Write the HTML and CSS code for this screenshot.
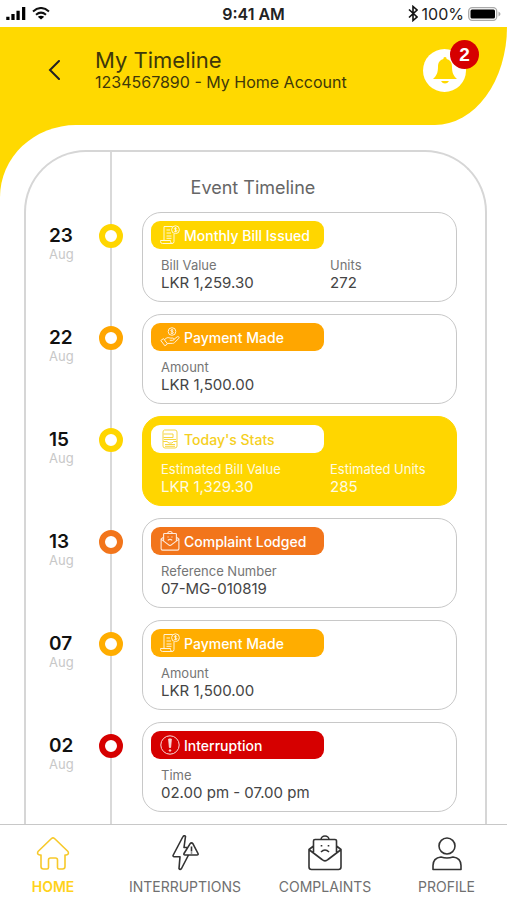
FILE: index.html
```html
<!DOCTYPE html>
<html lang="en">
<head>
<meta charset="utf-8">
<meta name="viewport" content="width=device-width, initial-scale=1">
<title>My Timeline</title>
<link rel="stylesheet" href="styles.css">
</head>
<body>
<svg class="sprite" aria-hidden="true">
  <symbol id="bill" viewBox="0 0 20 20">
    <path d="M4 15V1.500h8.500M14 9v7.500a2 2 0 0 1-2 2H2.500a2 2 0 0 1-2-2V15.500h10v1a2 2 0 0 0 2 2M6.500 5h3.500M6.500 8h4.500M6.500 11h5M6.500 13.300h5"/>
    <circle cx="15.500" cy="4.700" r="3.900"/>
    <path d="M16.800 3.500c-.7-.8-2.500-.7-2.500.3s2.600.7 2.600 1.900-2 1.300-2.800.4M15.500 2.200v5"/>
  </symbol>
  <symbol id="hand" viewBox="0 0 20 20">
    <circle cx="12" cy="4.500" r="3.800"/>
    <path d="M13.300 3.300c-.7-.8-2.500-.7-2.500.3s2.600.7 2.600 1.900-2 1.300-2.800.4M12 2v5M.8 13.500l2.700-1.900 4 5.300-2.600 1.900zM4.300 12.700l2.500-1.800c1.500-.8 2.700.2 4 .2h2c1.700 0 1.500 2.200 0 2.200H9.800M13.800 12.500l3.400-2.700c1.300-.8 2.600.5 1.500 1.700l-4.200 4.100c-.7.700-1.200.8-2 .8H7.300"/>
  </symbol>
  <symbol id="stats" viewBox="0 0 20 20">
    <path d="M4.500 1h10.500a2 2 0 0 1 2 2v14a2 2 0 0 1-2 2H5a2 2 0 0 1-2-2V3a2 2 0 0 1 1.500-2M3.500 5h9.500v3.500H3.500M3 12.500h4l2 1.500h3l1.500-1.500H17M5 15.500h10M5 17.300h10M4 10.500h12"/>
  </symbol>
  <symbol id="mail" viewBox="0 0 36 36">
    <path d="M6.500 11 2 14.500V32a2.500 2.500 0 0 0 2.500 2.500h27A2.500 2.500 0 0 0 34 32V14.500L29.500 11M2.500 15 15 24.500q3 2.700 6 0L33.500 15M6.500 18V6a1.500 1.500 0 0 1 1.500-1.500h20A1.500 1.500 0 0 1 29.500 6v12M14 4.500a4 3.500 0 0 1 8 0M14 17q4-4 8 0M14.500 10v1.500M21.500 10v1.500"/>
  </symbol>
  <symbol id="alert" viewBox="0 0 20 20">
    <circle cx="10" cy="10" r="9.200"/>
    <path d="M8.700 4h2.600l-.7 8.500H9.400z" fill="currentColor"/>
    <circle cx="10" cy="15.500" r=".8" fill="currentColor"/>
  </symbol>
</svg>

<div class="status">
  <div class="status-side">
    <svg class="signal" viewBox="0 0 21 14" aria-label="Signal"><path d="M0 10.500h3.500V14H0zM5.500 7.500H9V14H5.500zM11 4h3.500v10H11zM17 0h3.500v14H17z"/></svg>
    <svg class="wifi" viewBox="0 0 18 13" aria-label="Wi-Fi"><path d="M1 4.500q8-7 16 0M4 7.800q5-4.300 10 0" fill="none" stroke="#111" stroke-width="2"/><path d="M9 12.500 5.800 9.800q3.200-2.300 6.400 0z"/></svg>
  </div>
  <time class="clock">9:41 AM</time>
  <div class="status-side status-right">
    <svg class="bluetooth" viewBox="0 0 10 16" aria-label="Bluetooth"><path d="m1 4 8 7.500-4 3.500V1l4 3.500L1 12" fill="none" stroke="#111" stroke-width="1.600"/></svg>
    <span>100%</span>
    <svg class="battery" viewBox="0 0 33 14" aria-label="Battery"><rect x=".7" y=".7" width="28" height="12.600" rx="3.500" fill="#fff" stroke="#aaa" stroke-width="1.300"/><rect x="2.500" y="2.500" width="24.500" height="9" rx="1.500"/><path d="M30.500 4.500q4 2.500 0 5z" fill="#aaa"/></svg>
  </div>
</div>

<header class="header">
  <button class="back" aria-label="Back"><svg viewBox="0 0 12 20"><path d="M11 1 2 10l9 9"/></svg></button>
  <div class="heading">
    <h1>My Timeline</h1>
    <p>1234567890 - My Home Account</p>
  </div>
  <button class="bell" aria-label="Notifications">
    <svg viewBox="0 0 24 27"><path d="M12 0c1.200 0 1.600.8 1.600 2 3.800 1 5.400 4 5.400 7.500 0 6 1.200 9 5 12.500H0c3.800-3.500 5-6.500 5-12.500C5 6 6.600 3 10.400 2c0-1.200.4-2 1.600-2zM8 24h8q-1.500 2.500-4 2.500T8 24z"/></svg>
    <span class="count">2</span>
  </button>
</header>

<div class="backdrop">
<main class="content">
  <section class="panel">
    <h2>Event Timeline</h2>
    <ol class="events">
      <li class="event yellow">
        <time class="date"><b>23</b>Aug</time><span class="dot"></span>
        <article class="card">
          <h3><svg><use href="#bill"/></svg>Monthly Bill Issued</h3>
          <dl><div><dt>Bill Value</dt><dd>LKR 1,259.30</dd></div><div><dt>Units</dt><dd>272</dd></div></dl>
        </article>
      </li>
      <li class="event orange">
        <time class="date"><b>22</b>Aug</time><span class="dot"></span>
        <article class="card">
          <h3><svg><use href="#hand"/></svg>Payment Made</h3>
          <dl><div><dt>Amount</dt><dd>LKR 1,500.00</dd></div></dl>
        </article>
      </li>
      <li class="event yellow today">
        <time class="date"><b>15</b>Aug</time><span class="dot"></span>
        <article class="card">
          <h3><svg><use href="#stats"/></svg>Today's Stats</h3>
          <dl><div><dt>Estimated Bill Value</dt><dd>LKR 1,329.30</dd></div><div><dt>Estimated Units</dt><dd>285</dd></div></dl>
        </article>
      </li>
      <li class="event rust">
        <time class="date"><b>13</b>Aug</time><span class="dot"></span>
        <article class="card">
          <h3><svg class="heavy"><use href="#mail"/></svg>Complaint Lodged</h3>
          <dl><div><dt>Reference Number</dt><dd>07-MG-010819</dd></div></dl>
        </article>
      </li>
      <li class="event amber">
        <time class="date"><b>07</b>Aug</time><span class="dot"></span>
        <article class="card">
          <h3><svg><use href="#bill"/></svg>Payment Made</h3>
          <dl><div><dt>Amount</dt><dd>LKR 1,500.00</dd></div></dl>
        </article>
      </li>
      <li class="event red">
        <time class="date"><b>02</b>Aug</time><span class="dot"></span>
        <article class="card">
          <h3><svg><use href="#alert"/></svg>Interruption</h3>
          <dl><div><dt>Time</dt><dd>02.00 pm - 07.00 pm</dd></div></dl>
        </article>
      </li>
    </ol>
  </section>
</main>
</div>

<nav class="nav">
  <a class="active" href="#home"><svg viewBox="0 0 36 36"><path d="M16.500 3.500q1.500-1.300 3 0L33 16.500q1.500 3-2 3.500h-1v11.500a2.500 2.500 0 0 1-2.500 2.500H24q-1.500 0-1.500-1.500V25q0-2-2-2h-5q-2 0-2 2v7.500q0 1.500-1.500 1.500H8.500A2.500 2.500 0 0 1 6 31.500V20H5q-3.500-.5-2-3.500z"/></svg>HOME</a>
  <a href="#interruptions"><svg viewBox="0 0 36 36"><path d="M16 1.500 6 20.500q0 1.200 1 1.200h6L12 33.500q1 1.800 2.500 0L21.500 20M16 1.500q1.500-1.500 2.500 0L17 12.500h3M17 18.500l6-9.700q1.500-1.800 3 0l5 9.700q.5 1.500-1 1.500H18q-1.500 0-1-1.500zM24.500 11.500v5M24.500 17.500v1"/></svg>INTERRUPTIONS</a>
  <a href="#complaints"><svg viewBox="0 0 36 36"><use href="#mail"/></svg>COMPLAINTS</a>
  <a href="#profile"><svg viewBox="0 0 36 36"><circle cx="18" cy="11" r="8"/><path d="M4 34.500v-4q0-7.500 8-8.500 6 2 12 0 8 1 8 8.500v4z"/></svg>PROFILE</a>
</nav>
</body>
</html>
```
FILE: styles.css
```css
* { box-sizing: border-box; }

body {
  margin: 0;
  height: 100vh;
  display: flex;
  flex-direction: column;
  background: #fff;
  color: #333;
  font-family: Inter, "Open Sans", sans-serif;
}

h1, h2, h3, p, dl, dd, ol { margin: 0; padding: 0; font-weight: 400; }
button { border: 0; padding: 0; cursor: pointer; }
svg { display: block; flex: none; }

.sprite { position: absolute; width: 0; height: 0; }

.status {
  display: flex;
  align-items: center;
  height: 27px;
  padding: 0 6px;
  font-size: 16px;
  color: #222;
  flex: none;
}
.status-side { flex: 1; display: flex; align-items: center; gap: 6px; }
.status-right { justify-content: flex-end; gap: 4px; }
.clock { font-weight: 600; }
.signal { width: 20px; height: 13px; }
.wifi { width: 18px; height: 13px; }
.bluetooth { width: 10px; height: 17px; }
.battery { width: 33px; height: 14px; }

.header {
  display: flex;
  align-items: center;
  height: 98px;
  padding: 0 41px 12px 48px;
  background: #ffd900;
  border-bottom-right-radius: 72px 98px;
  flex: none;
}
.back { width: 12px; height: 20px; background: none; }
.back svg { width: 12px; height: 20px; fill: none; stroke: #222; stroke-width: 2; stroke-linecap: round; }
.heading { flex: 1; padding-left: 35px; color: #40380a; }
h1 { font-size: 22px; line-height: 24px; }
.heading p { font-size: 16px; line-height: 20px; }
.bell {
  position: relative;
  display: grid;
  place-items: center;
  width: 43px;
  height: 43px;
  border-radius: 50%;
  background: #fff;
}
.bell svg { width: 24px; height: 27px; fill: #ffd900; }
.count {
  position: absolute;
  top: -9px;
  right: -13px;
  width: 29px;
  height: 29px;
  border-radius: 50%;
  background: #d60000;
  color: #fff;
  font-size: 19px;
  font-weight: 600;
  line-height: 29px;
}

.backdrop {
  flex: 1;
  min-height: 0;
  overflow: hidden;
  background: linear-gradient(#ffd900, #ffd900) 0 0 / 80px 80px no-repeat;
}
.content {
  padding: 25px 20px 0 24px;
  background: #fff;
  border-top-left-radius: 76px 72px;
}
.panel {
  padding: 24px 28px 40px 23px;
  border: 2px solid #d6d6d6;
  border-bottom: 0;
  border-radius: 62px 62px 0 0;
  background: linear-gradient(#d9d9d9, #d9d9d9) 84px 0 / 2px 100% no-repeat;
}
h2 { color: #666; font-size: 18px; line-height: 24px; text-align: center; }
.events { list-style: none; display: grid; gap: 12px; padding-top: 12px; }
.event { display: grid; grid-template-columns: 50px 24px 1fr; }
.date { padding-top: 13px; color: #c8c8c8; font-size: 13px; line-height: 14px; }
.date b { display: block; color: #111; font-size: 19px; font-weight: 600; line-height: 22px; }
.dot {
  width: 24px;
  height: 24px;
  margin-top: 12px;
  border: 6px solid var(--tone);
  border-radius: 50%;
  background: #fff;
}
.card {
  min-height: 90px;
  margin-left: 19px;
  padding: 8px 8px 7px;
  border: 1px solid #c8c8c8;
  border-radius: 19px;
  background: #fff;
}
h3 {
  display: flex;
  align-items: center;
  gap: 4px;
  width: 173px;
  height: 28px;
  padding-left: 9px;
  border-radius: 9px;
  background: var(--tone);
  color: #fff;
  font-size: 14px;
  font-weight: 500;
}
h3 svg { width: 20px; height: 20px; fill: none; stroke: currentColor; stroke-width: 1; opacity: .85; }
h3 .heavy { stroke-width: 2; }
dl { display: grid; grid-template-columns: 169px 1fr; padding: 8px 0 0 10px; }
dt { color: #757575; font-size: 13px; line-height: 16px; white-space: nowrap; }
dd { color: #444; font-size: 15px; line-height: 20px; white-space: nowrap; }

.yellow { --tone: #ffd600; }
.orange { --tone: #ffa600; }
.amber { --tone: #ffad00; }
.rust { --tone: #f2751b; }
.red { --tone: #d60000; }
.today .card { background: var(--tone); border-color: var(--tone); }
.today h3 { background: #fff; color: #f5cf22; }
.today dt, .today dd { color: #fffbe0; }

.nav {
  display: grid;
  grid-template-columns: 106px 158px 122px 1fr;
  height: 76px;
  padding-top: 10px;
  border-top: 1px solid #c8c8c8;
  background: #fff;
  flex: none;
}
.nav a {
  display: flex;
  flex-direction: column;
  align-items: center;
  gap: 7px;
  color: #707070;
  font-size: 14px;
  line-height: 18px;
  text-decoration: none;
}
.nav svg { width: 36px; height: 36px; fill: none; stroke: #333; stroke-width: 1.6; stroke-linejoin: round; }
.nav .active { color: #ffd21a; font-weight: 600; }
.nav .active svg { stroke: #f7c92a; }
```
